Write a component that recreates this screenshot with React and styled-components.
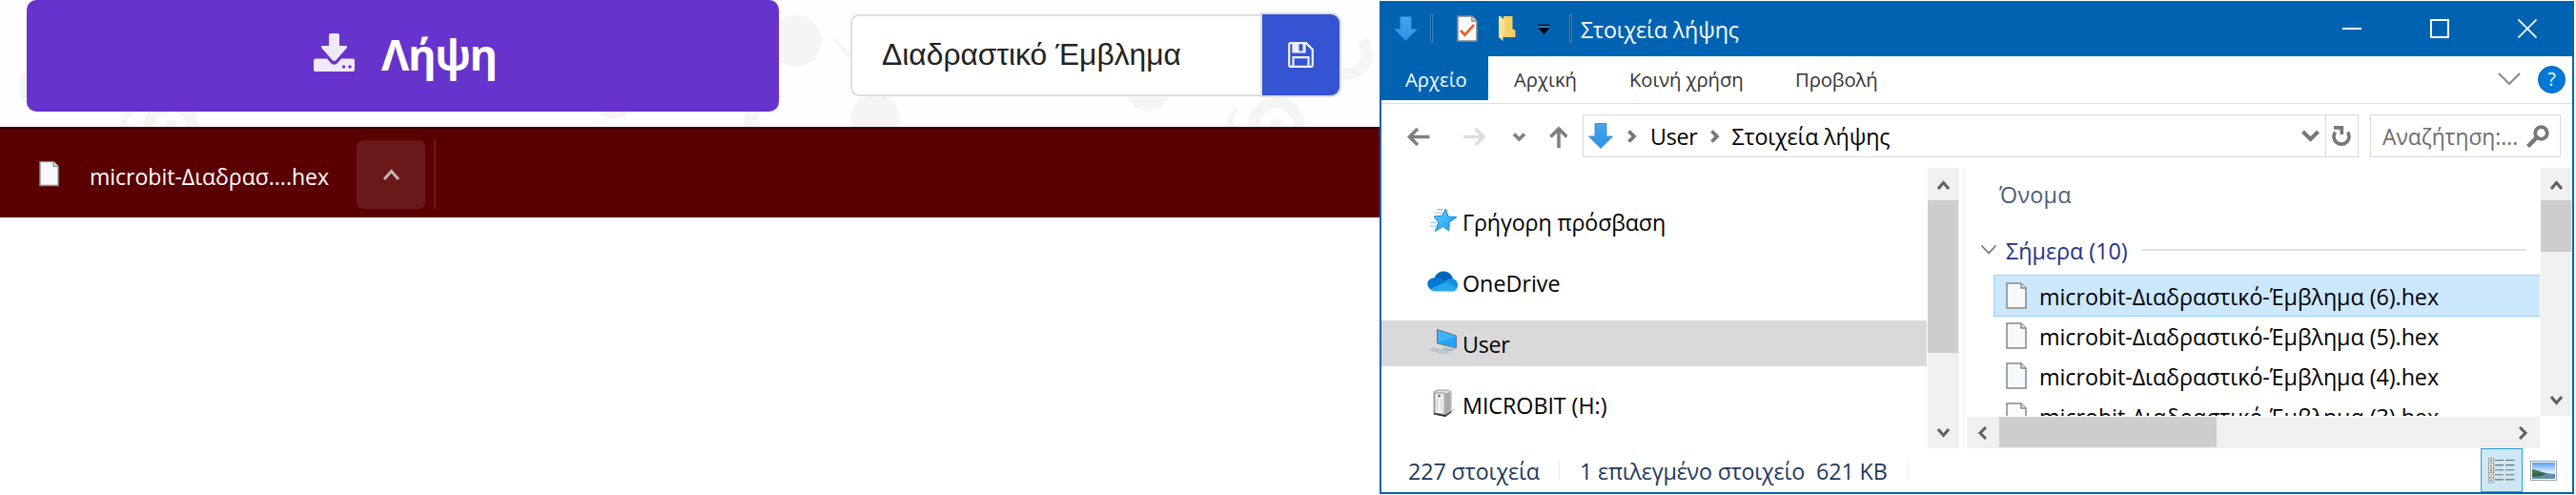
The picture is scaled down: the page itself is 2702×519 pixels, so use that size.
import React from 'react';
import styled, { createGlobalStyle, css } from 'styled-components';

const GlobalStyle = createGlobalStyle`
  * { box-sizing: border-box; }
  body { margin: 0; background: #fff; overflow: hidden; font-family: "Open Sans", "Noto Sans", sans-serif; }
  svg { display: block; flex: none; }
`;

const BLUE = '#0063b1';

const Screen = styled.div`display: flex; width: 2702px; height: 519px; overflow: hidden; background: #fff;`;
const Browser = styled.div`width: 1447px; flex: none;`;

/* Text label: size, tracking and colour vary with the use */
const Label = styled.span`
  white-space: pre;
  line-height: 1;
  padding-top: ${(p) => (p.$drop === undefined ? 3 : p.$drop)}px;
  font-size: ${(p) => p.$size || 23.3}px;
  letter-spacing: ${(p) => p.$track || 0}px;
  color: ${(p) => p.$color || '#000'};
`;

/* ---------- Editor page ---------- */
const EditorFooter = styled.div`position: relative; display: flex; height: 133px; padding-left: 28px; overflow: hidden; background: #fefefe;`;
const Doodles = styled.svg`position: absolute; inset: 0;`;
const DownloadButton = styled.button`
  position: relative; display: flex; align-items: center; justify-content: flex-start;
  width: 789px; height: 117px; padding: 0 0 8px 301px; gap: 28px; border: 0; border-radius: 10px;
  background: #6633cc; color: #fff; font: 700 45px/1 "Open Sans", sans-serif; letter-spacing: -1.3px;
`;
const ButtonText = styled.span`padding-top: 3px;`;
const ProjectGroup = styled.div`position: relative; display: flex; width: 513px; height: 86px; margin: 15px 0 0 75px;`;
const ProjectName = styled.div`
  display: flex; align-items: center; width: 432px; padding: 0 0 0 31px;
  border: 2px solid #dededf; border-right: 0; border-radius: 9px 0 0 9px; background: #fff;
  font: 31.8px/1 "Liberation Sans", Arial, sans-serif; color: #222;
`;
const SaveButton = styled.div`
  display: flex; align-items: center; justify-content: center; width: 81px; height: 85px;
  border-radius: 0 9px 9px 0; background: #3454d1; box-shadow: 0 0 0 2px #dededf;
`;

/* ---------- Download shelf ---------- */
const Shelf = styled.div`display: flex; align-items: center; height: 95px; padding-left: 41px; border-top: 2px solid #3d0000; background: #5b0000;`;
const ShelfName = styled.div`display: flex; width: 312px; padding: 6px 0 0 32px;`;
const ShelfMenu = styled.div`
  display: flex; align-items: center; justify-content: center; width: 72px; height: 72px; margin-top: 3px;
  border-radius: 7px; background: #6a191b;
`;
const ShelfRule = styled.div`width: 2px; height: 72px; margin: 3px 0 0 9px; background: #6b1d1d;`;

/* ---------- Explorer window ---------- */
const Window = styled.section`
  display: flex; flex-direction: column; width: 1253px; height: 517px; margin-top: 1px;
  border: 2px solid ${BLUE}; border-top: 0; background: #fff;
`;
const TitleBar = styled.header`display: flex; align-items: center; height: 58px; padding-left: 13px; background: ${BLUE};`;
const TitleRule = styled.div`width: 3px; height: 30px; border: 1px solid #3c84c0; background: #17456f; margin-left: ${(p) => p.$left}px;`;
const TitleIcon = styled.div`margin-left: ${(p) => p.$left}px;`;
const WindowTitle = styled.div`display: flex; margin-left: 9px; flex: 1;`;
const WindowControls = styled.div`display: flex; align-items: center; gap: 72px; padding-right: 37px;`;

const Ribbon = styled.nav`display: flex; height: 50px; border-bottom: 1px solid #dadbdc;`;
const RibbonTab = styled.div`
  display: flex; align-items: center; height: 46px; width: ${(p) => p.$w}px; padding-left: ${(p) => p.$left}px;
  background: ${(p) => (p.$active ? BLUE : 'transparent')};
`;
const RibbonEnd = styled.div`display: flex; align-items: center; gap: 18px; height: 48px; margin-left: auto; padding-right: 7px;`;
const Help = styled.div`
  display: flex; align-items: center; justify-content: center; width: 29px; height: 29px;
  border: 1px solid #0a5aa5; border-radius: 50%; background: #0078d7;
`;

const NavBar = styled.div`display: flex; align-items: center; height: 67px; padding-left: 27px;`;
const Arrows = styled.div`display: flex; align-items: center; width: 184px;`;
const Field = styled.div`display: flex; align-items: center; height: 45px; border: 1px solid #d9d9d9; width: ${(p) => p.$w}px;`;
const Crumb = styled.div`display: flex; margin: 0 ${(p) => p.$right || 0}px 0 ${(p) => p.$left || 14}px;`;
const Refresh = styled.div`display: flex; align-items: center; justify-content: center; width: 34px; height: 43px; border-left: 1px solid #d9d9d9;`;
const RefreshCell = styled.div`margin-left: auto;`;

const Body = styled.div`display: flex; height: 294px;`;
const Sidebar = styled.div`display: flex; flex-direction: column; gap: 16px; width: 573px; padding: 32px 1px 0 0;`;
const TreeItem = styled.div`
  display: flex; align-items: center; height: 48px; padding: 0 0 0 48px; gap: 3px;
  background: ${(p) => (p.$selected ? '#d9d9d9' : 'transparent')};
`;
const TreeIcon = styled.div`display: flex; width: 34px; height: 32px; align-items: center; margin-top: -2px;`;

const ScrollBar = styled.div`
  display: flex; justify-content: space-between; flex: none; background: #f0f0f0;
  ${(p) =>
    p.$horizontal
      ? css`height: 33px; align-items: center; width: 601px; padding: 0 12px 0 11px;`
      : css`flex-direction: column; align-items: center; width: 33px; height: ${p.$length}px; padding: 13px 0 11px;`}
`;
const Thumb = styled.div`
  background: #cdcdcd; align-self: flex-start;
  ${(p) =>
    p.$horizontal
      ? css`width: ${p.$size}px; height: 32px; margin: 0 auto 0 13px;`
      : css`width: 32px; height: ${p.$size}px; margin: 11px 0 auto;`}
`;
const Splitter = styled.div`width: 8px; padding-left: 4px;`;
const SplitterLine = styled.div`width: 1px; height: 294px; background: #f3f3f3;`;

const FilePane = styled.div`display: flex; flex-direction: column; width: 601px;`;
const FileList = styled.div`height: 260px; margin-bottom: 1px; overflow: hidden;`;
const ColumnHead = styled.div`display: flex; align-items: center; height: 56px; padding: 0 0 2px 34px;`;
const GroupHead = styled.div`display: flex; align-items: center; height: 57px; padding: 3px 14px 0 15px;`;
const GroupName = styled.div`display: flex; width: 153px; padding-left: 10px;`;
const GroupLine = styled.div`flex: 1; height: 2px; background: #e2e2e2;`;
const FileRow = styled.div`
  display: flex; align-items: center; height: 42px; margin-left: 28px; padding-left: 13px; gap: 13px;
  ${(p) =>
    p.$selected &&
    css`height: 44px; margin-top: -1px; margin-bottom: -1px; padding-left: 12px; background: #cce8ff; border: 1px solid #99d1ff; border-right: 0;`}
`;

const StatusBar = styled.footer`display: flex; align-items: center; height: 46px; padding-left: 28px;`;
const StatusCell = styled.div`display: flex; gap: 12px; width: ${(p) => p.$w}px;`;
const StatusRule = styled.div`width: 1px; height: 22px; margin-right: 21px; background: #ececec;`;
const Views = styled.div`display: flex; align-items: center; gap: 8px; height: 46px; margin-left: auto; padding-right: 16px;`;
const ViewButton = styled.div`
  display: flex; align-items: center; justify-content: center; width: 44px; height: 46px;
  border: 1px solid #26a0da; background: #cce8f6;
`;

const Chevron = ({ d, w = 13, h = 10, sw = 3, c = '#606060' }) => (
  <svg width={w} height={h} viewBox={`0 0 ${w} ${h}`} fill="none" stroke={c} strokeWidth={sw}><path d={d} /></svg>
);
const UP = 'M1 9 6.5 2.5 12 9';
const DOWN = 'M1 1 6.5 7.5 12 1';
const CRUMB = 'M1.5 1.5 7 7 1.5 12.5';

const DocIcon = ({ w = 22, h = 28, stroke = '#868686', check }) => (
  <svg width={w} height={h} viewBox="0 0 22 28">
    <path d="M1 1h15l5 5v21H1z" fill="#f8f9fa" stroke={stroke} strokeWidth="1.500" />
    <path d="M16 1v5h5" fill="#e6e8ea" stroke={stroke} strokeWidth="1.500" />
    {check && <path d="m4 16 4.500 4.500L18 10" fill="none" stroke="#f2561d" strokeWidth="2.600" />}
  </svg>
);
const BlueArrow = ({ w = 26, h = 27 }) => (
  <svg width={w} height={h} viewBox="0 0 26 27">
    <defs><linearGradient id="arrowFill" x1="0" y1="0" x2="0" y2="1"><stop offset="0" stopColor="#4aa3ec" /><stop offset="1" stopColor="#2b93e8" /></linearGradient></defs>
    <path d="M7 .5h12V14h6.500L13 26.500.5 14H7z" fill="url(#arrowFill)" stroke="#2585d6" strokeWidth=".8" />
  </svg>
);
const StarIcon = () => (
  <svg width="34" height="26" viewBox="0 0 34 26">
    <defs><linearGradient id="starFill" x1="0" y1="0" x2="1" y2="1"><stop offset="0" stopColor="#6fd0fb" /><stop offset="1" stopColor="#0b9bfa" /></linearGradient></defs>
    <path d="m19.500 1 2.300 8 9.200.6-7.800 5.400-.4 9-6.200-4.400-8.200 4.800 3.500-9.400L7 9l8.600-.7z" fill="url(#starFill)" stroke="#1886cc" />
    <path d="M10 1.500h7M8 5h8M3.500 15.500h6M3 19h6" stroke="#7fbfe8" strokeWidth="1" />
  </svg>
);
const CloudIcon = () => (
  <svg width="34" height="22" viewBox="0 0 34 22">
    <path d="M7 9C9 2 14 0 18 .5s8 3 9 8l-8 5z" fill="#0364b8" />
    <path d="M7.500 7.200C12 6 14 8 20 12L4 20C-2 15-.5 8 7.500 7.200z" fill="#0078d4" />
    <path d="M18 11.500C22 7 28 7 31 11c2 4 .8 7-1 9z" fill="#1490df" />
    <path d="m19.500 11.500 12 6.500c-1.500 3-4 3.500-5 3.500H8c-2 0-4-1-5-2.500z" fill="#28a8ea" />
  </svg>
);
const ComputerIcon = () => (
  <svg width="34" height="30" viewBox="0 0 34 30">
    <path d="m10.500 1.500 20 6.500v13l-20-5z" fill="#3fb2ff" stroke="#69737c" />
    <path d="m11.500 15.500 18.500-7v11.800z" fill="#23a4fb" />
    <path d="m18 20 8 2 3-1v2l-5 1.500-8-2.500z" fill="#a9b8c1" />
    <path d="m1 22.500 5-2 20 5.500-6 2.500z" fill="#d8dfe3" />
    <path d="m2 22.500 17 5M4 21.500l18 5M6 20.500l18 5" stroke="#98a5ad" strokeWidth="1" strokeDasharray="2 1" />
  </svg>
);
const DriveIcon = () => (
  <svg width="34" height="30" viewBox="0 0 34 30">
    <path d="m24 24 5-4-4 7z" fill="#d5d5d5" />
    <path d="m7 3 4-2h11l3 1.500V24l-6 4.500L7 26z" fill="#dedede" stroke="#999" />
    <path d="M8 4h10v22.500L8 25z" fill="#f3f3f3" stroke="#777" strokeWidth=".8" />
    <path d="M19 4.500 24 3v20l-5 4z" fill="#aaa" />
    <path d="m7 25 12 2 6-4v1.500L19 29 7 26.500z" fill="#333" />
    <circle cx="12.500" cy="7" r="1.600" fill="#4a9f3c" />
    <path d="M10.500 10v13M15 10v13" stroke="#ccc" />
  </svg>
);
const DetailsIcon = () => (
  <svg width="28" height="27" viewBox="0 0 28 27">
    {['#3f6f8f', '#6f8f5f', '#c0301c', '#8f9f5f', '#3f6f9f'].map((c, i) => (
      <g key={c} transform={`translate(0 ${i * 5.1})`}>
        <rect x=".6" y=".6" width="5" height="5" fill="#fff" stroke="#a0a0a0" strokeWidth="1.100" />
        <rect x="2.200" y="2.200" width="1.900" height="1.900" fill={c} />
        <path d="M7 2.500h9M18 2.500h9.500" stroke="#707070" strokeWidth="1.100" />
      </g>
    ))}
  </svg>
);
const PictureIcon = () => (
  <svg width="28" height="21" viewBox="0 0 28 21">
    <defs><linearGradient id="sky" x1="0" y1="0" x2="0" y2="1"><stop offset="0" stopColor="#5a9cf5" /><stop offset=".6" stopColor="#e0f0fa" /><stop offset="1" stopColor="#7fa9bf" /></linearGradient></defs>
    <rect x=".5" y=".5" width="27" height="20" fill="#fff" stroke="#a0a0a0" />
    <rect x="2" y="2" width="24" height="17" fill="url(#sky)" />
    <path d="M2 9c6 1 12 4 20 5H2z" fill="#3d7550" />
    <path d="M2 14h24v5H2z" fill="#5d8ea6" />
    <path d="M2 13.500h15l-7 3H2z" fill="#2e5f50" />
  </svg>
);
const DownloadIcon = () => (
  <svg width="43" height="40" viewBox="0 0 43 40">
    <path d="M18 0h7q2 0 2 2v11h6.500q2.500 0 1 2.500L23.500 28q-2 2-4 0L8.500 15.500Q7 13 9.500 13H16V2q0-2 2-2z" fill="#efeafa" />
    <path d="M2 26.500h12l4.500 5q3 2.600 6 0l4.500-5h12q2 0 2 2V38q0 2-2 2H2q-2 0-2-2v-9.500q0-2 2-2z" fill="#efeafa" />
    <circle cx="31.500" cy="35" r="1.700" fill="#6633cc" /><circle cx="38" cy="35" r="1.700" fill="#6633cc" />
  </svg>
);
const Floppy = () => (
  <svg width="27" height="27" viewBox="0 0 27 27" fill="none" stroke="#eef1fc" strokeWidth="2.200">
    <path d="M2.500 1.200H19L25.800 8v16.500q0 1.300-1.300 1.300h-22q-1.300 0-1.300-1.300v-22q0-1.300 1.300-1.300z" />
    <path d="M5.500 25.500V16.200h16v9.300" />
    <path d="M5.500 1.500v9h12v-9" />
    <path d="M6 2h5.500v8H6zM15.500 2H17v8h-1.500z" fill="#eef1fc" stroke="none" />
  </svg>
);

const FILES = [6, 5, 4, 3];
const TREE = [
  { name: 'Γρήγορη πρόσβαση', icon: <StarIcon />, track: -0.15 },
  { name: 'OneDrive', icon: <CloudIcon /> },
  { name: 'User', icon: <ComputerIcon />, selected: true, track: -0.3 },
  { name: 'MICROBIT (H:)', icon: <DriveIcon />, track: -0.05 },
];

export default function App() {
  return (
    <Screen>
      <GlobalStyle />
      <Browser>
        <EditorFooter>
          <Doodles width="1447" height="133" fill="#f5f5f5">
            <circle cx="835" cy="43" r="27" />
            <circle cx="918" cy="125" r="26" />
            <circle cx="1204" cy="94" r="22.500" />
            <circle cx="644" cy="102" r="22.500" />
            <rect x="781" y="112" width="15" height="20" />
            <rect x="810" y="93" width="10" height="13" />
            <ellipse cx="34" cy="91" rx="14" ry="20" />
            <g fill="none" stroke="#f5f5f5">
              <path d="m875 41 18 20" strokeWidth="4" />
              <circle cx="1339" cy="131" r="23.500" strokeWidth="12" />
              <circle cx="179" cy="134" r="23" strokeWidth="12" />
              <path d="M1298 114q-14 12-2 24M137 118q-14 8-2 20" strokeWidth="6" />
              <path d="M1405 76c18 6 38-10 24-34" strokeWidth="12" />
            </g>
            <circle cx="1339" cy="131" r="7" />
            <circle cx="179" cy="132" r="7" />
          </Doodles>
          <DownloadButton><DownloadIcon /><ButtonText>Λήψη</ButtonText></DownloadButton>
          <ProjectGroup>
            <ProjectName>Διαδραστικό Έμβλημα</ProjectName>
            <SaveButton><Floppy /></SaveButton>
          </ProjectGroup>
        </EditorFooter>
        <Shelf>
          <DocIcon stroke="#8b9094" w={21} />
          <ShelfName><Label $drop={1} $size={23}>{''}</Label><Label $drop={1} $size={23} $color="#fff">microbit-Διαδρασ....hex</Label></ShelfName>
          <ShelfMenu><Chevron d="M2 11 9.500 2.500 17 11" w={19} h={13} sw={3} c="#c4b4b4" /></ShelfMenu>
          <ShelfRule />
        </Shelf>
      </Browser>

      <Window>
        <TitleBar>
          <BlueArrow w={25} h={26} />
          <TitleRule $left={13} />
          <TitleIcon $left={25}><DocIcon check /></TitleIcon>
          <TitleIcon $left={21}>
            <svg width="19" height="28" viewBox="0 0 19 28">
              <path d="M6 1h9.500v13.500l3 1V23H5z" fill="#f5cf68" />
              <path d="M1 1h2l4.500 4.500V21H5.500v6L1 23z" fill="#fbe192" />
            </svg>
          </TitleIcon>
          <TitleIcon $left={23}>
            <svg width="13" height="11" viewBox="0 0 13 11"><path d="M.5 1.500h12M2 5h9l-4.500 5z" fill="#000" stroke="#000" strokeWidth="1.300" /><path d="M.5 3h12" stroke="#8fb5d8" strokeWidth=".8" /></svg>
          </TitleIcon>
          <TitleRule $left={20} />
          <WindowTitle><Label $color="#fff" $track={-0.15}>Στοιχεία λήψης</Label></WindowTitle>
          <WindowControls>
            <svg width="20" height="20" viewBox="0 0 20 20"><path d="M0 10h20" stroke="#fff" strokeWidth="2" /></svg>
            <svg width="20" height="20" viewBox="0 0 20 20"><path d="M1 1h18v18H1z" fill="none" stroke="#fff" strokeWidth="2" /></svg>
            <svg width="20" height="20" viewBox="0 0 20 20"><path d="m.5.500 19 19m0-19-19 19" stroke="#fff" strokeWidth="1.700" /></svg>
          </WindowControls>
        </TitleBar>

        <Ribbon>
          <RibbonTab $active $w={112} $left={25}><Label $size={20.3} $color="#fff">Αρχείο</Label></RibbonTab>
          <RibbonTab $w={122} $left={27}><Label $size={20.3} $color="#333">Αρχική</Label></RibbonTab>
          <RibbonTab $w={175} $left={26}><Label $size={20.3} $color="#333" $track={-0.1}>Κοινή χρήση</Label></RibbonTab>
          <RibbonTab $w={130} $left={25}><Label $size={20.3} $color="#333" $track={-0.1}>Προβολή</Label></RibbonTab>
          <RibbonEnd>
            <Chevron d="M1 1 12 12 23 1" w={24} h={14} sw={1.8} c="#848484" />
            <Help><Label $drop={0} $size={20} $color="#fff">?</Label></Help>
          </RibbonEnd>
        </Ribbon>

        <NavBar>
          <Arrows>
            <svg width="168" height="24" viewBox="0 0 168 24" fill="none" strokeWidth="3.600">
              <path d="M23.500 12.500H3M11 4 2.500 12.500 11 21" stroke="#808080" />
              <path d="M59 12.500h20.500M71.500 4 80 12.500 71.500 21" stroke="#ddd" />
              <path d="m112 9.500 5.500 5.500 5.500-5.500" stroke="#808080" />
              <path d="M159 24V4M150.500 12.500 159 4l8.500 8.500" stroke="#808080" />
            </svg>
          </Arrows>
          <Field $w={814}>
            <TitleIcon $left={5}><BlueArrow /></TitleIcon>
            <TitleIcon $left={15}><Chevron d={CRUMB} w={10} h={14} sw={3.8} c="#777" /></TitleIcon>
            <Crumb $right={13}><Label $track={-0.3}>User</Label></Crumb>
            <Chevron d={CRUMB} w={10} h={14} sw={3.8} c="#777" />
            <Crumb $left={13}><Label $track={-0.15}>Στοιχεία λήψης</Label></Crumb>
            <RefreshCell><Chevron d="m1.500 2 8 8 8-8" w={19} h={13} sw={4} c="#777" /></RefreshCell>
            <TitleIcon $left={6}>
              <Refresh>
                <svg width="21" height="22" viewBox="0 0 21 22" fill="none" stroke="#777" strokeWidth="3.600"><path d="M3.500 6.500a8 8 0 1 0 13 0" /><path d="M2 1.900h8.300V9" /></svg>
              </Refresh>
            </TitleIcon>
          </Field>
          <TitleIcon $left={12}>
            <Field $w={200}>
              <Crumb $left={12} $right={9}><Label $size={22.8} $color="#6d6d6d">Αναζήτηση:...</Label></Crumb>
              <svg width="24" height="24" viewBox="0 0 24 24" fill="none" stroke="#777" strokeWidth="3.800"><circle cx="15.500" cy="8.500" r="6.300" /><path d="m11 13-9.500 9.500" strokeWidth="4.400" /></svg>
            </Field>
          </TitleIcon>
        </NavBar>

        <Body>
          <Sidebar>
            {TREE.map((t) => (
              <TreeItem key={t.name} $selected={t.selected}>
                <TreeIcon>{t.icon}</TreeIcon>
                <Label $drop={4} $track={t.track}>{t.name}</Label>
              </TreeItem>
            ))}
          </Sidebar>
          <ScrollBar $length={294}>
            <Chevron d={UP} />
            <Thumb $size={160} />
            <Chevron d={DOWN} />
          </ScrollBar>
          <Splitter><SplitterLine /></Splitter>
          <FilePane>
            <FileList>
              <ColumnHead><Label $color="#4c607a" $track={0.3}>Όνομα</Label></ColumnHead>
              <GroupHead>
                <Chevron d="m.500.500 7.500 8 7.500-8" w={16} h={10} sw={1.5} c="#666" />
                <GroupName><Label $color="#1e3287">Σήμερα (10)</Label></GroupName>
                <GroupLine />
              </GroupHead>
              {FILES.map((n) => (
                <FileRow key={n} $selected={n === 6}>
                  <DocIcon />
                  <Label $drop={4} $track={-0.05}>{`microbit-Διαδραστικό-Έμβλημα (${n}).hex`}</Label>
                </FileRow>
              ))}
            </FileList>
            <ScrollBar $horizontal>
              <Chevron d="M9 1 3 7l6 6" w={10} h={14} />
              <Thumb $horizontal $size={228} />
              <Chevron d="m1 1 6 6-6 6" w={10} h={14} />
            </ScrollBar>
          </FilePane>
          <TitleIcon $left={1}>
            <ScrollBar $length={260}>
              <Chevron d={UP} />
              <Thumb $size={54} />
              <Chevron d={DOWN} />
            </ScrollBar>
          </TitleIcon>
        </Body>

        <StatusBar>
          <StatusCell $w={158}><Label $color="#1e395b" $track={-0.1}>227 στοιχεία</Label></StatusCell>
          <StatusRule />
          <StatusCell $w={344}>
            <Label $color="#1e395b" $track={-0.2}>1 επιλεγμένο στοιχείο</Label>
            <Label $color="#1e395b" $track={-0.1}>621 KB</Label>
          </StatusCell>
          <StatusRule />
          <Views>
            <ViewButton><DetailsIcon /></ViewButton>
            <PictureIcon />
          </Views>
        </StatusBar>
      </Window>
    </Screen>
  );
}
